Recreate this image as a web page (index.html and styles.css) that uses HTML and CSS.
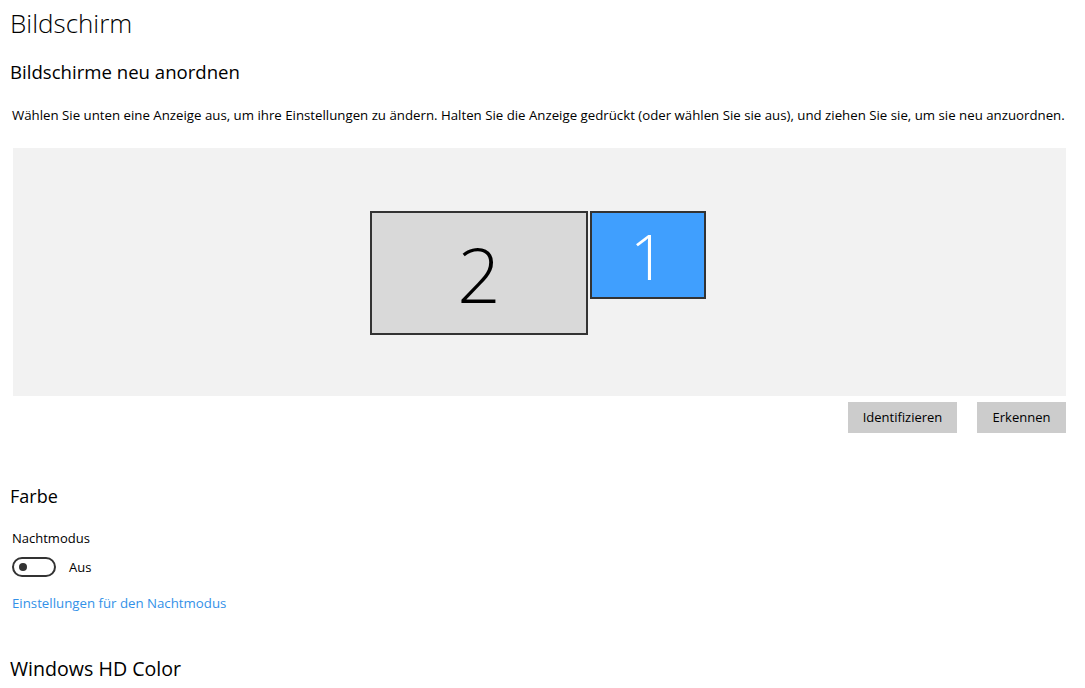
FILE: index.html
```html
<!doctype html>
<html>
<head>
<meta charset="utf-8">
<title>Bildschirm</title>
<link rel="stylesheet" href="styles.css">
</head>
<body>
<div class="page">
	<h1>Bildschirm</h1>
	<h2 class="sub">Bildschirme neu anordnen</h2>
	<p class="desc">Wählen Sie unten eine Anzeige aus, um ihre Einstellungen zu ändern. Halten Sie die Anzeige gedrückt (oder wählen Sie sie aus), und ziehen Sie sie, um sie neu anzuordnen.</p>

	<div class="arrange">
		<div class="screens">
			<div class="screen s2">2</div>
			<div class="screen s1">1</div>
		</div>
	</div>
	<div class="actions">
		<a href="javascript:;" class="btn b1">Identifizieren</a>
		<a href="javascript:;" class="btn b2">Erkennen</a>
	</div>

	<h3 class="farbe">Farbe</h3>
	<div class="label">Nachtmodus</div>
	<div class="toggle-row">
		<span class="toggle"><i></i></span>
		<span>Aus</span>
	</div>
	<a href="javascript:;" class="link">Einstellungen für den Nachtmodus</a>

	<h2 class="hd">Windows HD Color</h2>
</div>
</body>
</html>
```
FILE: styles.css
```css
*{margin:0;padding:0}
body{font-family:"Open Sans","Noto Sans",sans-serif;color:#000;background:#fff;overflow:hidden}
.page{padding:0 19px 0 10px;width:1056px}
h1{font-size:26px;font-weight:300;line-height:30px;padding-top:8px}
.sub{font-size:18.6px;font-weight:400;line-height:26px;margin-top:21px}
.desc{font-size:13.25px;line-height:18px;margin:21px 0 0 2px;white-space:nowrap}
.arrange{margin:24px 0 0 3px;height:248px;background:#f2f2f2;position:relative}
.screens{display:flex;align-items:flex-start;gap:2px;position:absolute;left:357px;top:63px}
.screen{border:2px solid #333;display:flex;align-items:center;justify-content:center;font-weight:300;box-sizing:border-box}
.s2{width:218px;height:124px;background:#d9d9d9;font-size:76px;color:#000}
.s1{width:116px;height:88px;background:#409ffe;font-size:63px;color:#fff}
.actions{display:flex;justify-content:flex-end;gap:20px;margin-top:6px}
.btn{display:block;background:#ccc;color:#000;text-decoration:none;font-size:13px;line-height:31px;text-align:center}
.b1{width:109px}
.b2{width:89px}
.farbe{font-size:18px;font-weight:400;margin-top:51px;line-height:24px}
.label{font-size:13px;margin:21px 0 0 2px;line-height:18px}
.toggle-row{display:flex;align-items:center;gap:13px;margin:10px 0 0 2px;font-size:13px}
.toggle{width:44px;height:20px;border:2px solid #333;border-radius:11px;box-sizing:border-box;position:relative;display:block}
.toggle i{position:absolute;left:5px;top:4px;width:8px;height:8px;border-radius:50%;background:#333}
.link{display:block;color:#3391e8;text-decoration:none;font-size:13.25px;margin:17px 0 0 2px;line-height:18px}
.hd{font-size:19.6px;font-weight:400;line-height:26px;margin-top:44px}
```
